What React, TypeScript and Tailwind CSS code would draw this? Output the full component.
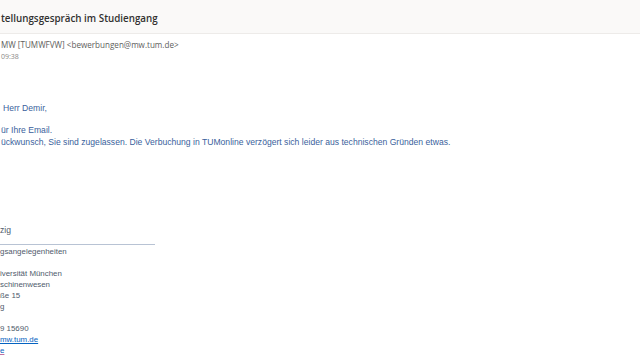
import React from "react";

const signatureLines = [
  "gsangelegenheiten",
  "",
  "iversität München",
  "schinenwesen",
  "ße 15",
  "g",
  "",
  "9 15690",
];

export default function App() {
  return (
    <div className="w-[640px] h-[360px] overflow-hidden bg-white">
      {/* subject bar */}
      <div className="h-[34px] bg-[#faf9f8] border-b border-[#edebe9] flex items-center pt-[5px] pl-px">
        <h1 className="text-[9.8px] font-semibold text-[#323130] font-['Open_Sans',sans-serif] leading-none">
          tellungsgespräch im Studiengang
        </h1>
      </div>

      {/* sender */}
      <div className="pt-[5px] pl-px font-['Open_Sans',sans-serif]">
        <div className="text-[8.1px] text-[#605e5c] leading-[12px]">
          MW [TUMWFVW] &lt;bewerbungen@mw.tum.de&gt;
        </div>
        <div className="text-[7px] text-[#8a8886] leading-[12px]">09:38</div>
      </div>

      {/* body */}
      <div className="pt-[39px] pl-px text-[8.6px] leading-[12px] text-[#3a5f9c] font-['Liberation_Sans',sans-serif]">
        <p className="pl-[2px]">Herr Demir,</p>
        <p className="mt-[10px]">ür Ihre Email.</p>
        <p>
          ückwunsch, Sie sind zugelassen. Die Verbuchung in TUMonline verzögert sich leider aus technischen
          Gründen etwas.
        </p>
      </div>

      {/* signature */}
      <div className="pt-[77px] text-[7.9px] leading-[11px] text-[#4f5b6c] font-['Liberation_Sans',sans-serif]">
        <p className="text-[8.6px]">zig</p>
        <div className="mt-[8px] w-[155px] h-px bg-[#b8c3d4]" />
        <div className="mt-px">
          {signatureLines.map((line, i) => (
            <p key={i} className="h-[11px]">
              {line}
            </p>
          ))}
          <p className="text-[#0563c1] underline">mw.tum.de</p>
          <p className="text-[#0563c1] underline decoration-[#c070a0]">e</p>
        </div>
      </div>
    </div>
  );
}
